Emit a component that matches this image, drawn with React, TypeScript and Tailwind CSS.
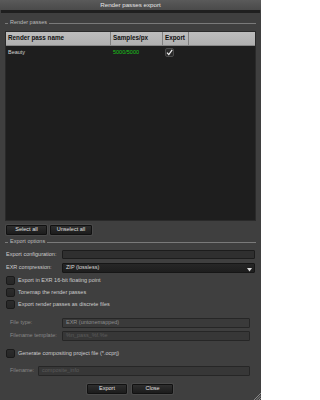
import React from "react";

const font = { fontFamily: '"Liberation Sans", Arial, sans-serif' };

function Legend({ label }: { label: string }) {
  return (
    <div className="flex items-center h-[8px] px-[5px] gap-[2px]">
      <div className="w-[3px] h-px bg-[#7a7a7a]" />
      <span className="text-[5.5px] leading-none text-[#bcbcbc]">{label}</span>
      <div className="flex-1 h-px bg-[#7a7a7a]" />
    </div>
  );
}

function Btn({ label, w }: { label: string; w: string }) {
  return (
    <div
      className={`${w} h-[10px] rounded-[1px] border border-[#111] bg-gradient-to-b from-[#2e2e2e] to-[#1c1c1c] flex items-center justify-center text-[5.5px] leading-none text-[#e0e0e0] shadow-[0_0_0_1px_#4a4a4a]`}
    >
      {label}
    </div>
  );
}

function Check({ checked = false }: { checked?: boolean }) {
  return (
    <div
      className={`w-[9px] h-[9px] rounded-[2px] border ${checked ? "border-[#4a4a4a] bg-[#2a2a2a]" : "border-[#1a1a1a] bg-gradient-to-b from-[#2c2c2c] to-[#262626]"} shrink-0 flex items-center justify-center`}
    >
      {checked && (
        <svg width="7" height="7" viewBox="0 0 7 7">
          <path d="M1 3.6 L2.8 5.6 L6.2 0.8" stroke="#f2f2f2" strokeWidth="1.2" fill="none" />
        </svg>
      )}
    </div>
  );
}

export default function App() {
  return (
    <div className="w-[261px] h-[400px] bg-[#3f3f3f] relative overflow-hidden flex flex-col" style={font}>
      <div className="h-[10px] bg-gradient-to-b from-[#5a5a5a] to-[#4a4a4a] flex items-center justify-center text-[6.2px] leading-none text-[#e6e6e6]">
        Render passes export
      </div>
      <div className="h-[3px] bg-[#1f1f1f] mx-[1px]" />

      <div className="mt-[6px]">
        <Legend label="Render passes" />
      </div>

      <div className="mt-[4px] mx-[5px] h-[190px] bg-[#1e1e1e] border border-[#2a2a2a] flex flex-col">
        <div className="h-[14px] bg-gradient-to-b from-[#bdbdbd] to-[#b0b0b0] flex text-[6.3px] font-bold leading-none text-[#111] border-b border-[#888]">
          <div className="w-[105px] flex items-center pl-[2px] border-r border-[#808080]">Render pass name</div>
          <div className="w-[52px] flex items-center pl-[2px] border-r border-[#808080]">Samples/px</div>
          <div className="w-[26px] flex items-center pl-[2px] border-r border-[#808080]">Export</div>
          <div className="flex-1" />
        </div>
        <div className="h-[11px] mt-[1px] flex items-center text-[5.5px] leading-none">
          <div className="w-[105px] pl-[2px] text-[#d2d2d2]">Beauty</div>
          <div className="w-[52px] pl-[2px] text-[#19c619]">5000/5000</div>
          <div className="w-[26px] pl-[2px] flex items-center">
            <Check checked />
          </div>
        </div>
      </div>

      <div className="mt-[4px] mx-[6px] flex gap-[3px]">
        <Btn label="Select all" w="w-[41px]" />
        <Btn label="Unselect all" w="w-[42px]" />
      </div>

      <div className="mt-[3px]">
        <Legend label="Export options" />
      </div>

      <div className="mt-[4px] flex items-center h-[9px] pl-[6px] pr-[6px] text-[5.5px] leading-none text-[#cccccc]">
        <div className="w-[56px]">Export configuration:</div>
        <div className="flex-1 h-full rounded-[1px] border border-[#1c1c1c] bg-[#2f2f2f]" />
      </div>

      <div className="mt-[4px] flex items-center h-[10px] pl-[6px] pr-[6px] text-[5.5px] leading-none text-[#cccccc]">
        <div className="w-[56px]">EXR compression:</div>
        <div className="flex-1 h-full rounded-[1px] border border-[#161616] bg-gradient-to-b from-[#262626] to-[#1e1e1e] flex items-center justify-between pl-[3px] pr-[2px] text-[#dcdcdc]">
          <span>ZIP (lossless)</span>
          <svg width="5" height="4" viewBox="0 0 5 4" className="mt-[3px]">
            <path d="M0 0 H5 L2.5 3.5 Z" fill="#dcdcdc" />
          </svg>
        </div>
      </div>

      {[
        "Export in EXR 16-bit floating point",
        "Tonemap the render passes",
        "Export render passes as discrete files",
      ].map((t) => (
        <div key={t} className="mt-[3px] flex items-center gap-[3px] pl-[6px] h-[9px] text-[5.5px] leading-none text-[#cccccc]">
          <Check />
          <span>{t}</span>
        </div>
      ))}

      <div className="mt-[9px] flex items-center h-[10px] pl-[10px] pr-[11px] text-[5.5px] leading-none text-[#888888]">
        <div className="w-[52px]">File type:</div>
        <div className="flex-1 h-full rounded-[1px] border border-[#262626] bg-[#3a3a3a] flex items-center pl-[3px] text-[#8c8c8c]">
          EXR (untonemapped)
        </div>
      </div>

      <div className="mt-[3px] flex items-center h-[10px] pl-[10px] pr-[11px] text-[5.5px] leading-none text-[#888888]">
        <div className="w-[52px]">Filename template:</div>
        <div className="flex-1 h-full rounded-[1px] border border-[#262626] bg-[#373737] flex items-center pl-[3px] text-[#5c5c5c]">
          %n_pass_%f.%e
        </div>
      </div>

      <div className="mt-[8px] flex items-center gap-[3px] pl-[6px] h-[9px] text-[5.5px] leading-none text-[#cccccc]">
        <Check />
        <span>Generate compositing project file (*.ocprj)</span>
      </div>

      <div className="mt-[8px] flex items-center h-[10px] pl-[10px] pr-[11px] text-[5.5px] leading-none text-[#888888]">
        <div className="w-[28px]">Filename:</div>
        <div className="flex-1 h-full rounded-[1px] border border-[#262626] bg-[#373737] flex items-center pl-[3px] text-[#5c5c5c]">
          composite_info
        </div>
      </div>

      <div className="mt-[8px] flex justify-center gap-[5px] pr-[1px]">
        <Btn label="Export" w="w-[40px]" />
        <Btn label="Close" w="w-[41px]" />
      </div>

      <svg width="8" height="8" viewBox="0 0 8 8" className="absolute right-0 bottom-0">
        <path d="M8 1 L1 8 M8 3.5 L3.5 8 M8 6 L6 8" stroke="#9a9a9a" strokeWidth="0.8" />
      </svg>
    </div>
  );
}
